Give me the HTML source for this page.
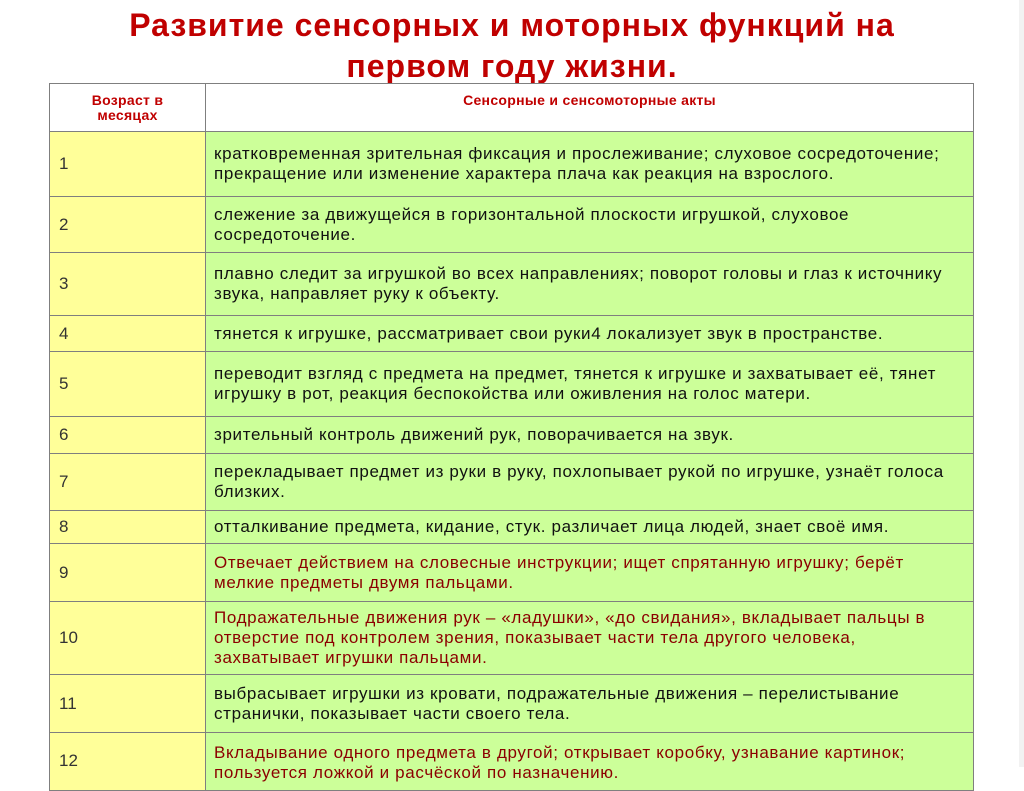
<!DOCTYPE html>
<html><head><meta charset="utf-8"><style>
body{margin:0;width:1024px;height:767px;overflow:hidden;background:#fff;font-family:"Liberation Sans",Arial,sans-serif;position:relative}
.t{position:absolute;left:0;width:1024px;top:5px;text-align:center;color:#c00000;font-weight:bold;font-size:32px;line-height:41px;letter-spacing:1px}
.edge{position:absolute;right:0;top:0;width:5px;height:767px;background:#f2f2f2}
table{position:absolute;left:49px;top:83px;border-collapse:collapse;width:925px}
td{border:1px solid #7f7f7f;padding:0 0 0 8px;font-size:17px;line-height:20px;letter-spacing:0.65px;color:#111;vertical-align:middle;white-space:nowrap}
td.a{width:146px;background:#ffff99;padding-left:9px;color:#333;letter-spacing:0}
td.b{background:#ccff99}
tr.h td{background:#fff;color:#c00000;font-weight:bold;font-size:14px;line-height:15px;letter-spacing:0.3px;text-align:center;vertical-align:top;padding:9px 0 0 0}
.r{color:#8b0000}
</style></head><body>
<div class="t">Развитие сенсорных и моторных функций на<br>первом году жизни.</div>
<div class="edge"></div>
<table>
<tr class="h" style="height:48px"><td style="width:155px">Возраст в<br>месяцах</td><td>Сенсорные и сенсомоторные акты</td></tr>
<tr style="height:65px"><td class="a">1</td><td class="b">кратковременная зрительная фиксация и прослеживание; слуховое сосредоточение;<br>прекращение или изменение характера плача как реакция на взрослого.</td></tr>
<tr style="height:56px"><td class="a">2</td><td class="b">слежение за движущейся в горизонтальной плоскости игрушкой, слуховое<br>сосредоточение.</td></tr>
<tr style="height:63px"><td class="a">3</td><td class="b">плавно следит за игрушкой во всех направлениях; поворот головы и глаз к источнику<br>звука, направляет руку к объекту.</td></tr>
<tr style="height:36px"><td class="a">4</td><td class="b">тянется к игрушке, рассматривает свои руки4 локализует звук в пространстве.</td></tr>
<tr style="height:65px"><td class="a">5</td><td class="b">переводит взгляд с предмета на предмет, тянется к игрушке и захватывает её, тянет<br>игрушку в рот, реакция беспокойства или оживления на голос матери.</td></tr>
<tr style="height:37px"><td class="a">6</td><td class="b">зрительный контроль движений рук, поворачивается на звук.</td></tr>
<tr style="height:57px"><td class="a">7</td><td class="b">перекладывает предмет из руки в руку, похлопывает рукой по игрушке, узнаёт голоса<br>близких.</td></tr>
<tr style="height:33px"><td class="a">8</td><td class="b">отталкивание предмета, кидание, стук. различает лица людей, знает своё имя.</td></tr>
<tr style="height:58px"><td class="a">9</td><td class="b r">Отвечает действием на словесные инструкции; ищет спрятанную игрушку; берёт<br>мелкие предметы двумя пальцами.</td></tr>
<tr style="height:73px"><td class="a">10</td><td class="b r">Подражательные движения рук – «ладушки», «до свидания», вкладывает пальцы в<br>отверстие под контролем зрения, показывает части тела другого человека,<br>захватывает игрушки пальцами.</td></tr>
<tr style="height:58px"><td class="a">11</td><td class="b">выбрасывает игрушки из кровати, подражательные движения – перелистывание<br>странички, показывает части своего тела.</td></tr>
<tr style="height:58px"><td class="a" style="vertical-align:top;padding-top:18px">12</td><td class="b r" style="vertical-align:top;padding-top:10px">Вкладывание одного предмета в другой; открывает коробку, узнавание картинок;<br>пользуется ложкой и расчёской по назначению.</td></tr>
</table>
</body></html>
